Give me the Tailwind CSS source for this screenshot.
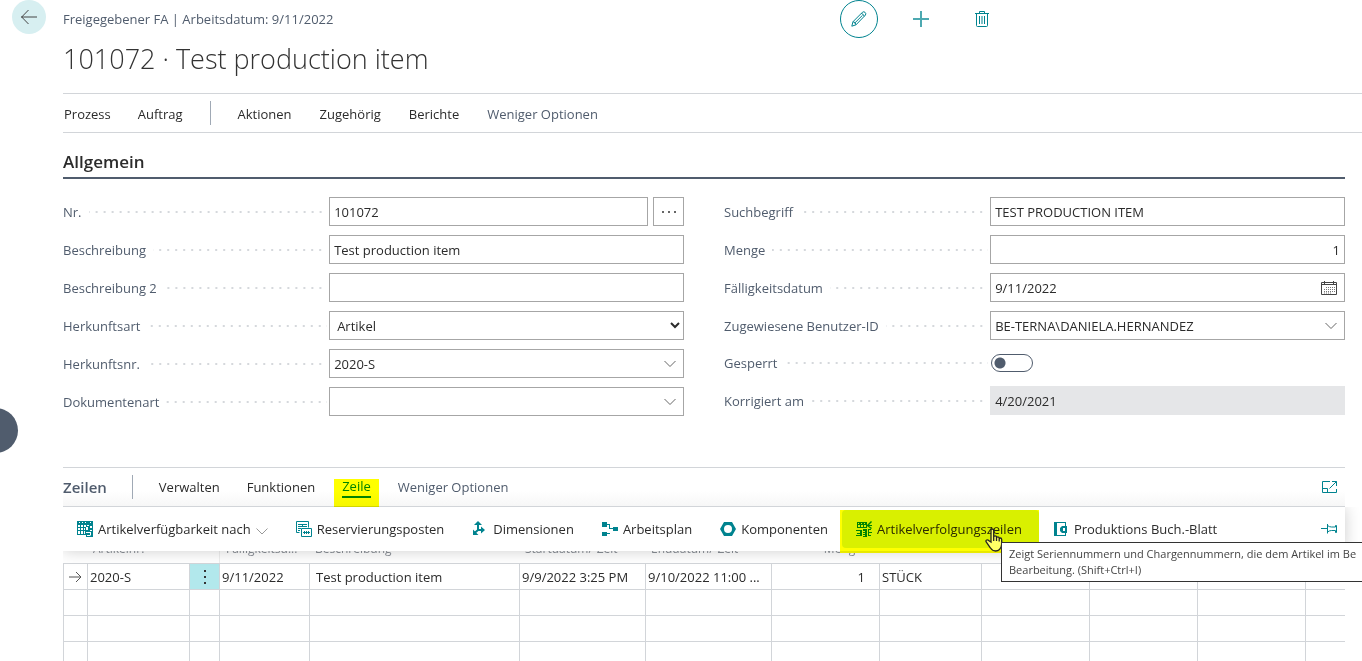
<!DOCTYPE html>
<html lang="de">
  <head>
    <meta charset="UTF-8" />
    <meta name="viewport" content="width=device-width, initial-scale=1.0" />
    <title>Freigegebener FA - 101072</title>
    <script src="https://cdn.jsdelivr.net/npm/@tailwindcss/browser@4"></script>
  </head>
  <body class="bg-white text-[#2b2b2b] font-['Open_Sans','Noto_Sans',sans-serif] text-[13px] leading-5">
    <div class="relative h-screen overflow-hidden pl-[63px]">
      <button aria-label="Zurück" class="absolute left-3 top-0 flex size-[34px] items-center justify-center rounded-full bg-[#d7eff1]">
        <svg class="size-4" viewBox="0 0 16 16" fill="none" stroke="#444"><path d="M0 8h16M7.5 1 .7 8l6.8 7" /></svg>
      </button>
      <button aria-label="Seitenbereich" class="absolute -left-[27px] top-[408px] size-[45px] rounded-full bg-[#505c6d]"></button>

      <header class="grid grid-cols-[3fr_2fr] pr-1">
        <div>
          <p class="mt-[9px] text-[#505c6d]">Freigegebener FA | Arbeitsdatum: 9/11/2022</p>
          <h1 class="mt-[10px] text-[27px] leading-10 font-light text-[#333]">101072 · Test production item</h1>
        </div>
        <div class="flex h-[38px] items-center">
          <button aria-label="Bearbeiten" class="flex size-[38px] items-center justify-center rounded-full border border-[#00838f]">
            <svg class="size-4" viewBox="0 0 16 16" fill="none" stroke="#00838f"><path d="M.8 15.2 2 10.7 11.5 1.2q1.3-1 2.6.2t.3 2.7L5 13.8zM2 10.7q2.5.2 3 3.1M10.3 2.4q2.4.6 2.9 2.9M3.6 12.2l7.9-7.9" /></svg>
          </button>
          <button aria-label="Neu" class="ml-[35px]">
            <svg class="size-4" viewBox="0 0 16 16" fill="none" stroke="#4da9b1" stroke-width="2"><path d="M0 8h16M8 0v16" /></svg>
          </button>
          <button aria-label="Löschen" class="ml-[45px]">
            <svg class="size-4" viewBox="0 0 16 16" fill="none" stroke="#00838f"><path d="M1 2.5h14M5.5 2.5v-2h5v2M2.5 2.5v12q0 1 1 1h9q1 0 1-1v-12M5.5 5v8M8 5v8M10.5 5v8" /></svg>
          </button>
        </div>
      </header>

      <nav class="mt-[14px] flex h-10 items-center gap-[27px] border-y border-[#d2d5d9] pt-[2px] pl-px">
        <button>Prozess</button>
        <button>Auftrag</button>
        <span class="-mt-[2px] h-6 w-px bg-[#a0a9b5]"></span>
        <div class="flex gap-7">
          <button>Aktionen</button>
          <button>Zugehörig</button>
          <button>Berichte</button>
          <button class="text-[#505c6d]">Weniger Optionen</button>
        </div>
      </nav>

      <main class="pr-[17px]">
        <h2 class="mt-[17px] border-b-2 border-[#505c6d] pb-[3px] text-[17px] leading-6 font-semibold">Allgemein</h2>

        <form class="mt-[18px] grid grid-cols-2 gap-x-10">
          <div class="flex flex-col gap-[9px]">
            <div class="grid h-[29px] grid-cols-[3fr_4fr] items-center">
              <div class="flex items-center gap-[7px] pr-[2px]">
                <label for="nr" class="text-[#505c6d]">Nr.</label>
                <span class="h-[2px] flex-1 bg-[linear-gradient(to_right,#d5d8dc_2px,transparent_2px)] bg-[length:8px_2px] bg-right"></span>
              </div>
              <div class="flex h-full gap-[5px]">
                <input id="nr" type="text" value="101072" class="min-w-0 flex-1 border border-[#a6a6a6] px-1" />
                <button type="button" aria-label="Weitere" class="flex w-[31px] items-center justify-center border border-[#a6a6a6]">
                  <svg class="h-1 w-4" viewBox="0 0 16 4" fill="#333"><circle cx="2" cy="2" r="1" /><circle cx="8" cy="2" r="1" /><circle cx="14" cy="2" r="1" /></svg>
                </button>
              </div>
            </div>
            <div class="grid h-[29px] grid-cols-[3fr_4fr] items-center">
              <div class="flex items-center gap-[7px] pr-[2px]">
                <label for="beschreibung" class="text-[#505c6d]">Beschreibung</label>
                <span class="h-[2px] flex-1 bg-[linear-gradient(to_right,#d5d8dc_2px,transparent_2px)] bg-[length:8px_2px] bg-right"></span>
              </div>
              <input id="beschreibung" type="text" value="Test production item" class="h-full w-full border border-[#a6a6a6] px-1" />
            </div>
            <div class="grid h-[29px] grid-cols-[3fr_4fr] items-center">
              <div class="flex items-center gap-[7px] pr-[2px]">
                <label for="beschreibung2" class="text-[#505c6d]">Beschreibung 2</label>
                <span class="h-[2px] flex-1 bg-[linear-gradient(to_right,#d5d8dc_2px,transparent_2px)] bg-[length:8px_2px] bg-right"></span>
              </div>
              <input id="beschreibung2" type="text" class="h-full w-full border border-[#a6a6a6] px-1" />
            </div>
            <div class="grid h-[29px] grid-cols-[3fr_4fr] items-center">
              <div class="flex items-center gap-[7px] pr-[2px]">
                <label for="herkunftsart" class="text-[#505c6d]">Herkunftsart</label>
                <span class="h-[2px] flex-1 bg-[linear-gradient(to_right,#d5d8dc_2px,transparent_2px)] bg-[length:8px_2px] bg-right"></span>
              </div>
              <select id="herkunftsart" class="h-full w-full border border-[#a6a6a6] bg-white pl-[3px]">
                <option>Artikel</option>
              </select>
            </div>
            <div class="grid h-[29px] grid-cols-[3fr_4fr] items-center">
              <div class="flex items-center gap-[7px] pr-[2px]">
                <label for="herkunftsnr" class="text-[#505c6d]">Herkunftsnr.</label>
                <span class="h-[2px] flex-1 bg-[linear-gradient(to_right,#d5d8dc_2px,transparent_2px)] bg-[length:8px_2px] bg-right"></span>
              </div>
              <div class="flex h-full items-center border border-[#a6a6a6] pr-[7px]">
                <input id="herkunftsnr" type="text" value="2020-S" class="min-w-0 flex-1 px-1" />
                <button type="button" aria-label="Auswählen">
                  <svg class="h-2 w-3" viewBox="0 0 12 8" fill="none" stroke="#666"><path d="M.5 1 6 6.5 11.5 1" /></svg>
                </button>
              </div>
            </div>
            <div class="grid h-[29px] grid-cols-[3fr_4fr] items-center">
              <div class="flex items-center gap-[7px] pr-[2px]">
                <label for="dokumentenart" class="text-[#505c6d]">Dokumentenart</label>
                <span class="h-[2px] flex-1 bg-[linear-gradient(to_right,#d5d8dc_2px,transparent_2px)] bg-[length:8px_2px] bg-right"></span>
              </div>
              <div class="flex h-full items-center border border-[#a6a6a6] pr-[7px]">
                <input id="dokumentenart" type="text" class="min-w-0 flex-1 px-1" />
                <button type="button" aria-label="Auswählen">
                  <svg class="h-2 w-3" viewBox="0 0 12 8" fill="none" stroke="#666"><path d="M.5 1 6 6.5 11.5 1" /></svg>
                </button>
              </div>
            </div>
          </div>

          <div class="flex flex-col gap-[9px]">
            <div class="grid h-[29px] grid-cols-[3fr_4fr] items-center">
              <div class="flex items-center gap-[7px] pr-[2px]">
                <label for="suchbegriff" class="text-[#505c6d]">Suchbegriff</label>
                <span class="h-[2px] flex-1 bg-[linear-gradient(to_right,#d5d8dc_2px,transparent_2px)] bg-[length:8px_2px] bg-right"></span>
              </div>
              <input id="suchbegriff" type="text" value="TEST PRODUCTION ITEM" class="h-full w-full border border-[#a6a6a6] px-1" />
            </div>
            <div class="grid h-[29px] grid-cols-[3fr_4fr] items-center">
              <div class="flex items-center gap-[7px] pr-[2px]">
                <label for="menge" class="text-[#505c6d]">Menge</label>
                <span class="h-[2px] flex-1 bg-[linear-gradient(to_right,#d5d8dc_2px,transparent_2px)] bg-[length:8px_2px] bg-right"></span>
              </div>
              <input id="menge" type="text" value="1" class="h-full w-full border border-[#a6a6a6] px-1 text-right" />
            </div>
            <div class="grid h-[29px] grid-cols-[3fr_4fr] items-center">
              <div class="flex items-center gap-[7px] pr-[2px]">
                <label for="faelligkeit" class="text-[#505c6d]">Fälligkeitsdatum</label>
                <span class="h-[2px] flex-1 bg-[linear-gradient(to_right,#d5d8dc_2px,transparent_2px)] bg-[length:8px_2px] bg-right"></span>
              </div>
              <div class="flex h-full items-center border border-[#a6a6a6] pr-[7px]">
                <input id="faelligkeit" type="text" value="9/11/2022" class="min-w-0 flex-1 px-1" />
                <button type="button" aria-label="Kalender">
                  <svg class="size-4" viewBox="0 0 16 16" fill="none" stroke="#444"><path d="M.5 2.500h15v12H.5zM.5 4.500h15M3.500 1v3M12.500 1v3" /><path stroke-dasharray="1 1" stroke="#777" d="M5 7.500h9M3 9.500h11M3 11.500h11M3 13h7" /></svg>
                </button>
              </div>
            </div>
            <div class="grid h-[29px] grid-cols-[3fr_4fr] items-center">
              <div class="flex items-center gap-[7px] pr-[2px]">
                <label for="benutzer" class="text-[#505c6d]">Zugewiesene Benutzer-ID</label>
                <span class="h-[2px] flex-1 bg-[linear-gradient(to_right,#d5d8dc_2px,transparent_2px)] bg-[length:8px_2px] bg-right"></span>
              </div>
              <div class="flex h-full items-center border border-[#a6a6a6] pr-[7px]">
                <input id="benutzer" type="text" value="BE-TERNA\DANIELA.HERNANDEZ" class="min-w-0 flex-1 px-1" />
                <button type="button" aria-label="Auswählen">
                  <svg class="h-2 w-3" viewBox="0 0 12 8" fill="none" stroke="#666"><path d="M.5 1 6 6.5 11.5 1" /></svg>
                </button>
              </div>
            </div>
            <div class="grid h-7 grid-cols-[3fr_4fr] items-center">
              <div class="flex items-center gap-[7px] pr-[2px]">
                <label for="gesperrt" class="text-[#505c6d]">Gesperrt</label>
                <span class="h-[2px] flex-1 bg-[linear-gradient(to_right,#d5d8dc_2px,transparent_2px)] bg-[length:8px_2px] bg-right"></span>
              </div>
              <input id="gesperrt" type="checkbox" role="switch" class="ml-px h-[18px] w-[42px] appearance-none rounded-full border border-[#505c6d] bg-[radial-gradient(circle_at_8px_8px,#505c6d_5px,transparent_6px)]" />
            </div>
            <div class="grid h-[29px] grid-cols-[3fr_4fr] items-center">
              <div class="flex items-center gap-[7px] pr-[2px]">
                <label for="korrigiert" class="text-[#505c6d]">Korrigiert am</label>
                <span class="h-[2px] flex-1 bg-[linear-gradient(to_right,#d5d8dc_2px,transparent_2px)] bg-[length:8px_2px] bg-right"></span>
              </div>
              <input id="korrigiert" type="text" value="4/20/2021" readonly class="h-full w-full bg-[#e5e6e8] px-[5px]" />
            </div>
          </div>
        </form>

        <section class="mt-[51px]">
          <div class="flex h-10 items-center border-y border-[#d2d5d9] bg-linear-to-b from-white from-60% to-[#f7f7f7]">
            <h2 class="text-[15px] font-semibold text-[#505c6d]">Zeilen</h2>
            <span class="ml-[25px] h-6 w-px bg-[#a0a9b5]"></span>
            <div class="ml-[26px] flex items-center gap-[27px]">
              <button>Verwalten</button>
              <button>Funktionen</button>
              <button class="relative text-[#00838f]">
                <span class="block border-b-2 border-[#00838f] leading-[19px]">Zeile</span>
                <span class="absolute -inset-x-2 top-[2px] z-20 h-7 bg-[#ffff00] mix-blend-multiply"></span>
              </button>
              <button class="text-[#505c6d]">Weniger Optionen</button>
            </div>
            <button aria-label="Vergrößern" class="mr-2 ml-auto">
              <svg class="h-3 w-[15px]" viewBox="0 0 15 12" fill="none" stroke="#00838f"><path d="M8 .5H.5v11h14V8M.5 7.500h5v4M14.500 5V.5H10M14.500.5 7.500 7.500" /></svg>
            </button>
          </div>

          <div class="relative">
            <div class="absolute inset-x-0 top-0 z-10 flex h-11 items-center bg-white shadow-[0_0_16px_rgba(0,0,0,0.2)] [clip-path:inset(0_-20px_-20px_0)]">
              <button class="flex items-center gap-[5px] px-[14px] whitespace-nowrap">
                <svg class="size-4" viewBox="0 0 16 16" fill="#00838f"><path fill-rule="evenodd" d="M0 0h16v16H9v-2H0zM1 4v2h2V4zm3 0v2h2V4zm3 0v2h2V4zm3 0v1h2V4zm3 1v2h2V5zM1 7v2h2V7zm3 0v2h2V7zm3 0v2h1V7zm2-1v3h2V6zM1 10v3h2v-3zm3 0v3h2v-3zm3 0v3h1v-3zm2 1v1h4v2h-3v1h3l1-1v-3zM2 1v1h1V1zm3 0v1h1V1zm3 0v1h1V1zm5 0v1h1V1zm0 8h2v1h-2z" /></svg>
                Artikelverfügbarkeit nach
                <svg class="mt-1 h-[7px] w-3" viewBox="0 0 12 7" fill="none" stroke="#999"><path d="M.5.5 6 6 11.5.5" /></svg>
              </button>
              <button class="flex items-center gap-[5px] px-[14px] whitespace-nowrap">
                <svg class="size-4" viewBox="0 0 16 16" fill="none" stroke="#00838f"><path d="M3.500 11.500h-3V.5h12v6M2 3.500h4M7 3.500h4M2 5.500h4M7 5.500h4M2 7.500h3M2 9.500h2M6.500 3v3M5.500 7.500h10v8h-10z" /><path d="M7 11.500h7M8.500 10v3M10.500 10v3M12.500 10v3" /></svg>
                Reservierungsposten
              </button>
              <button class="flex items-center gap-[5px] px-[14px] whitespace-nowrap">
                <svg class="size-4" viewBox="0 0 16 16" fill="none" stroke="#00838f" stroke-width="2"><path d="M6 2v7h5M6 9l-4 3.500" /><path fill="#00838f" stroke="none" d="M6 0l4 4H2zM13 9l-4-3.500v7zM1 8.500V14h5.500z" /></svg>
                Dimensionen
              </button>
              <button class="flex items-center gap-[5px] px-[14px] whitespace-nowrap">
                <svg class="size-4" viewBox="0 0 16 16" fill="#00838f"><path d="M0 1h5v5H0zM0 11h5v4H0zM11 6h5v4h-5zM5 3h3v4h3v1H7V4H5zM5 12h3v1H5z" /></svg>
                Arbeitsplan
              </button>
              <button class="flex items-center gap-[5px] px-[14px] whitespace-nowrap">
                <svg class="size-4" viewBox="0 0 16 16" fill="#00838f"><path fill-rule="evenodd" d="M4 1h8l4 7-4 7H4L0 8zM8 4a4 4 0 1 0 0 8 4 4 0 0 0 0-8z" /></svg>
                Komponenten
              </button>
              <button class="relative flex h-[38px] items-center gap-[5px] rounded-sm bg-[#d9f0f2] pr-[17px] pl-[14px] whitespace-nowrap">
                <svg class="size-4" viewBox="0 0 16 16" fill="#00838f"><path fill-rule="evenodd" d="M1 1h10v6H1zM2 2v1h1V2zm3 0v1h1V2zm3 0v1h1V2zM2 4v2h2V4zm3 0v2h2V4zm3 0v2h2V4zM11 4l4-4 1 1-3 3h3v1h-3l3 2-1 1-4-3zM0 9h6v6H0v-1h4v-1H1v-1h3v-2H0zM7 8h4v8H7v-1h2v-1H7v-1h2v-1H7v-1h2v-1H7zM12 8h3v1h-2v2h3v1h-3v2h2v1h-3z" /></svg>
                Artikelverfolgungszeilen
                <span class="absolute -left-[2px] right-0 top-0 h-[43px] bg-[#ffff00] mix-blend-multiply"></span>
                <svg class="absolute right-9 top-[18px] z-20 h-6 w-[18px]" viewBox="0 0 18 24" fill="none" stroke="#222" stroke-width="1.3"><path fill="#ffff66" d="M6 14V2.500Q6 1 7.300 1t1.400 1.500V9q0-1.200 1.400-1.200T11.500 9v1q0-1.200 1.300-1.200t1.400 1.200v1q0-1 1.200-1t1.300 1.500V16q0 3-2.200 5.500Q13 23 10.500 23 7.500 23 5.500 20L1.200 14q-.8-1.400.5-2 1.200-.5 2.300.8zM8.700 9v4M11.500 10v3M14.200 11v2.500" /></svg>
              </button>
              <button class="flex items-center gap-[5px] px-[14px] whitespace-nowrap">
                <svg class="size-4" viewBox="0 0 16 16" fill="#00838f"><path fill-rule="evenodd" d="M1 1h12v4h1v7h-1v3H1zM4 2v12h8v-2H9L7 10V7l2-2h3V2zM10 7v3h2V7z" /></svg>
                Produktions Buch.-Blatt
              </button>
              <button aria-label="Anheften" class="mr-2 ml-auto">
                <svg class="h-[10px] w-4" viewBox="0 0 16 10" fill="none" stroke="#00838f"><path d="M0 4.500h6M6.500 0v9.500M6.500 1.500q2 1.500 4 1.500h4V1.500h1v7h-1V6.500h-4q-2 0-4 1.500" /></svg>
              </button>
            </div>

            <div role="tooltip" class="absolute -right-[25px] left-[938px] top-[35px] z-30 overflow-hidden border border-[#333] bg-white px-[7px] py-[3px] text-[11px] leading-4 whitespace-nowrap text-[#444]">
              Zeigt Seriennummern und Chargennummern, die dem Artikel im Be<br />Bearbeitung. (Shift+Ctrl+I)
            </div>

            <table class="w-full table-fixed border-separate border-spacing-0">
              <colgroup>
                <col class="w-6" />
                <col class="w-[102px]" />
                <col class="w-[30px]" />
                <col class="w-[90px]" />
                <col class="w-[210px]" />
                <col class="w-[126px]" />
                <col class="w-[126px]" />
                <col class="w-[108px]" />
                <col class="w-[102px]" />
                <col class="w-[108px]" />
                <col class="w-[108px]" />
                <col class="w-[108px]" />
                <col />
              </colgroup>
              <thead>
                <tr class="h-14 text-left text-xs whitespace-nowrap text-[#8a8f96] [&>th]:pt-7 [&>th]:font-normal">
                  <th></th>
                  <th class="pl-[6px]">Artikelnr.</th>
                  <th></th>
                  <th class="border-l border-[#eee] pl-[6px]">Fälligkeitsd...</th>
                  <th class="pl-[6px]">Beschreibung</th>
                  <th class="pl-[6px]">Startdatum/-Zeit</th>
                  <th class="pl-[6px]">Enddatum/-Zeit</th>
                  <th class="pr-[17px] text-right">Menge</th>
                  <th class="pl-[6px]">Einheitencode</th>
                  <th></th>
                  <th></th>
                  <th></th>
                  <th></th>
                </tr>
              </thead>
              <tbody class="[&_td]:h-[26px] [&_td]:truncate [&_td]:border-t [&_td]:border-l [&_td]:border-[#d2d5d9] [&_td]:py-0">
                <tr>
                  <td><svg class="mx-auto h-3 w-[13px]" viewBox="0 0 13 12" fill="none" stroke="#555"><path d="M0 6h12M7 1l5 5-5 5" /></svg></td>
                  <td class="pl-[2px]">2020-S</td>
                  <td class="bg-[#b2e8ec]">
                    <button aria-label="Zeilenmenü" class="flex w-full justify-center">
                      <svg class="h-[14px] w-1" viewBox="0 0 4 14" fill="#333"><path d="M1 0h2v2H1zM1 6h2v2H1zM1 12h2v2H1z" /></svg>
                    </button>
                  </td>
                  <td class="pl-[2px]">9/11/2022</td>
                  <td class="pl-[6px]">Test production item</td>
                  <td class="pl-[2px]">9/9/2022 3:25 PM</td>
                  <td class="pl-[2px]">9/10/2022 11:00 ...</td>
                  <td class="pr-[14px] text-right">1</td>
                  <td class="pl-[2px]">STÜCK</td>
                  <td></td>
                  <td></td>
                  <td></td>
                  <td></td>
                </tr>
                <tr><td></td><td></td><td></td><td></td><td></td><td></td><td></td><td></td><td></td><td></td><td></td><td></td><td></td></tr>
                <tr><td></td><td></td><td></td><td></td><td></td><td></td><td></td><td></td><td></td><td></td><td></td><td></td><td></td></tr>
                <tr><td></td><td></td><td></td><td></td><td></td><td></td><td></td><td></td><td></td><td></td><td></td><td></td><td></td></tr>
              </tbody>
            </table>
          </div>
        </section>
      </main>
    </div>
  </body>
</html>
